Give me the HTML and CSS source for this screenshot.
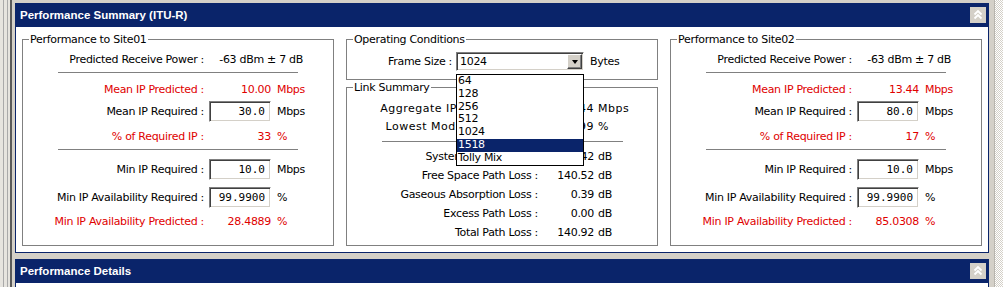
FILE: index.html
```html
<!DOCTYPE html>
<html lang="en">
	<head>
		<meta charset="UTF-8" />
		<title>Performance Summary</title>
		<link rel="stylesheet" href="styles.css">
	</head>
	<body>
		<div class="screen">
			<div class="edge"></div>
			<div class="main">
				<section class="panel panel-summary">
					<header class="panel-head">
						<span class="panel-title">Performance Summary (ITU-R)</span>
						<span class="collapse">
							<svg width="16" height="16" viewBox="0 0 16 16">
								<polyline points="4.5,7.5 8,4 11.5,7.5" />
								<polyline points="4.5,11.5 8,8 11.5,11.5" />
							</svg>
						</span>
					</header>
					<div class="panel-body summary">
						<fieldset class="group site">
							<legend>Performance to Site01</legend>
							<div class="row"><span class="lbl">Predicted Receive Power :</span><span class="wide">-63 dBm ± 7 dB</span></div>
							<div class="rule rule-a"></div>
							<div class="row red mt5"><span class="lbl">Mean IP Predicted :</span><span class="val">10.00</span><span class="unit">Mbps</span></div>
							<div class="row"><span class="lbl">Mean IP Required :</span><input class="num" type="text" value="30.0" /><span class="unit">Mbps</span></div>
							<div class="row red mt3"><span class="lbl">% of Required IP :</span><span class="val">33</span><span class="unit">%</span></div>
							<div class="rule rule-a"></div>
							<div class="row mt8"><span class="lbl">Min IP Required :</span><input class="num" type="text" value="10.0" /><span class="unit">Mbps</span></div>
							<div class="row mt6"><span class="lbl">Min IP Availability Required :</span><input class="num" type="text" value="99.9900" /><span class="unit">%</span></div>
							<div class="row red mt2"><span class="lbl">Min IP Availability Predicted :</span><span class="val">28.4889</span><span class="unit">%</span></div>
						</fieldset>

						<div class="middle">
							<fieldset class="group cond">
								<legend>Operating Conditions</legend>
								<div class="frow">
									<span class="flbl">Frame Size :</span>
									<div class="combo">
										<span class="combo-text">1024</span>
										<span class="combo-btn"><i class="tri"></i></span>
										<div class="droplist">
											<div>64</div>
											<div>128</div>
											<div>256</div>
											<div>512</div>
											<div>1024</div>
											<div class="sel">1518</div>
											<div>Tolly Mix</div>
										</div>
									</div>
									<span class="funit">Bytes</span>
								</div>
							</fieldset>
							<fieldset class="group link">
								<legend>Link Summary</legend>
								<div class="lrow spaced"><span class="llbl">Aggregate IP Throughput :</span><span class="lval">23.44</span><span class="lunit">Mbps</span></div>
								<div class="lrow spaced"><span class="llbl">Lowest Modulation Avail :</span><span class="lval">99.99</span><span class="lunit">%</span></div>
								<div class="rule rule-b"></div>
								<div class="lrow"><span class="llbl">System Fade Margin :</span><span class="lval">38.42</span><span class="lunit">dB</span></div>
								<div class="lrow"><span class="llbl">Free Space Path Loss :</span><span class="lval">140.52</span><span class="lunit">dB</span></div>
								<div class="lrow"><span class="llbl">Gaseous Absorption Loss :</span><span class="lval">0.39</span><span class="lunit">dB</span></div>
								<div class="lrow"><span class="llbl">Excess Path Loss :</span><span class="lval">0.00</span><span class="lunit">dB</span></div>
								<div class="lrow"><span class="llbl">Total Path Loss :</span><span class="lval">140.92</span><span class="lunit">dB</span></div>
							</fieldset>
						</div>

						<fieldset class="group site">
							<legend>Performance to Site02</legend>
							<div class="row"><span class="lbl">Predicted Receive Power :</span><span class="wide">-63 dBm ± 7 dB</span></div>
							<div class="rule rule-a"></div>
							<div class="row red mt5"><span class="lbl">Mean IP Predicted :</span><span class="val">13.44</span><span class="unit">Mbps</span></div>
							<div class="row"><span class="lbl">Mean IP Required :</span><input class="num" type="text" value="80.0" /><span class="unit">Mbps</span></div>
							<div class="row red mt3"><span class="lbl">% of Required IP :</span><span class="val">17</span><span class="unit">%</span></div>
							<div class="rule rule-a"></div>
							<div class="row mt8"><span class="lbl">Min IP Required :</span><input class="num" type="text" value="10.0" /><span class="unit">Mbps</span></div>
							<div class="row mt6"><span class="lbl">Min IP Availability Required :</span><input class="num" type="text" value="99.9900" /><span class="unit">%</span></div>
							<div class="row red mt2"><span class="lbl">Min IP Availability Predicted :</span><span class="val">85.0308</span><span class="unit">%</span></div>
						</fieldset>
					</div>
				</section>

				<section class="panel panel-details">
					<header class="panel-head">
						<span class="panel-title">Performance Details</span>
						<span class="collapse">
							<svg width="16" height="16" viewBox="0 0 16 16">
								<polyline points="4.5,7.5 8,4 11.5,7.5" />
								<polyline points="4.5,11.5 8,8 11.5,11.5" />
							</svg>
						</span>
					</header>
					<div class="panel-body"></div>
				</section>
			</div>
			<div class="track"></div>
		</div>
	</body>
</html>
```

FILE: styles.css
```css
html,
body {
	margin: 0;
	height: 100%;
	overflow: hidden;
}

body {
	background: #d4d0c8;
	color: #000;
	font-family: 'DejaVu Sans', sans-serif;
	font-size: 11px;
	letter-spacing: -0.3px;
}

.screen {
	display: flex;
	height: 287px;
	overflow: hidden;
}

.edge {
	width: 15px;
	flex: none;
	background: linear-gradient(
		to right,
		#e6e4df 0 3px,
		#a9a9a9 3px 4px,
		#e6e4df 4px 7px,
		#a9a9a9 7px 8px,
		#e6e4df 8px 10px,
		#5a5a5a 10px 12px,
		#d4d0c8 12px 15px
	);
}

.main {
	flex: 1;
	padding-top: 3px;
	margin-right: 5px;
}

.track {
	width: 8px;
	flex: none;
	border-left: 1px solid #b8b5ae;
	background-color: #fff;
	background-image: repeating-conic-gradient(#d4d0c8 0 25%, #fff 0 50%);
	background-size: 2px 2px;
}

/* panels */
.panel {
	background: #fff;
	border: 1px solid #0a246a;
	border-top: 0;
}

.panel-summary {
	margin-bottom: 6px;
}

.panel-details {
	border-bottom: 0;
}

.panel-head {
	height: 24px;
	background: #0a246a;
	color: #fff;
	display: flex;
	align-items: center;
	justify-content: space-between;
	padding: 0 2px 0 4px;
}

.panel-title {
	font-family: 'Liberation Sans', Arial, sans-serif;
	font-weight: bold;
	font-size: 11.5px;
	letter-spacing: 0;
}

.collapse {
	width: 16px;
	height: 16px;
	background: #d4d0c8;
	display: block;
}

.collapse svg {
	display: block;
	fill: none;
	stroke: #fff;
	stroke-width: 1.8;
}

.panel-body.summary {
	height: 225px;
	box-sizing: border-box;
	padding: 6px;
	display: grid;
	grid-template-columns: repeat(3, 1fr);
	column-gap: 12px;
}

.panel-details .panel-body {
	height: 4px;
}

/* group boxes */
.group {
	margin: 0;
	padding: 0;
	min-width: 0;
	border: 1px solid #808080;
}

.group legend {
	margin-left: 6px;
	padding: 0 1px;
	line-height: 13px;
}

.site {
	padding-top: 2px;
}

.row {
	display: flex;
	align-items: center;
	height: 22px;
	white-space: nowrap;
}

.red {
	color: #e00000;
}

.mt2 { margin-top: 2px; }
.mt3 { margin-top: 3px; }
.mt5 { margin-top: 5px; }
.mt6 { margin-top: 6px; }
.mt8 { margin-top: 8px; }

.lbl {
	width: 181px;
	flex: none;
	text-align: right;
}

.val {
	width: 62px;
	flex: none;
	margin-left: 5px;
	text-align: right;
}

.wide {
	width: 94px;
	flex: none;
	margin-left: 5px;
	text-align: right;
}

.unit {
	margin-left: 6px;
}

.num {
	width: 62px;
	height: 21px;
	flex: none;
	margin: 0 0 0 5px;
	box-sizing: border-box;
	padding: 0 5px 0 0;
	text-align: right;
	font-family: 'DejaVu Sans Mono', monospace;
	font-size: 11px;
	letter-spacing: 0;
	color: #000;
	background: #fff;
	border: 1px solid;
	border-color: #808080 #fff #fff #808080;
	box-shadow: inset 1px 1px #404040, inset -1px -1px #d4d0c8;
	outline: none;
}

.rule {
	height: 1px;
	background: #808080;
}

.rule-a {
	margin: 2px 0 0 35px;
	width: 240px;
}

.rule-b {
	margin: 6px 0 5px 35px;
	width: 241px;
}

/* middle column */
.middle {
	display: flex;
	flex-direction: column;
}

.cond {
	padding: 6px 0 8px;
}

.frow {
	display: flex;
	align-items: center;
	height: 19px;
}

.flbl {
	width: 105px;
	flex: none;
	text-align: right;
}

.combo {
	position: relative;
	width: 128px;
	height: 19px;
	flex: none;
	margin-left: 4px;
	box-sizing: border-box;
	padding: 1px;
	display: flex;
	background: #fff;
	border: 1px solid;
	border-color: #808080 #fff #fff #808080;
	box-shadow: inset 1px 1px #404040, inset -1px -1px #d4d0c8;
}

.combo-text {
	flex: 1;
	padding-left: 2px;
	line-height: 15px;
}

.combo-btn {
	width: 15px;
	height: 15px;
	box-sizing: border-box;
	background: #d4d0c8;
	border: 1px solid;
	border-color: #fff #404040 #404040 #fff;
	box-shadow: inset -1px -1px #808080;
	display: flex;
	align-items: center;
	justify-content: center;
}

.tri {
	width: 0;
	height: 0;
	border-left: 3.5px solid transparent;
	border-right: 3.5px solid transparent;
	border-top: 4px solid #000;
}

.droplist {
	position: absolute;
	z-index: 10;
	left: -1px;
	top: 21px;
	width: 128px;
	box-sizing: border-box;
	border: 1px solid #000;
	background: #fff;
}

.droplist div {
	height: 12.8px;
	line-height: 12.8px;
	padding-left: 1px;
}

.droplist .sel {
	background: #0a246a;
	color: #fff;
}

.funit {
	margin-left: 6px;
}

.link {
	flex: 1;
	margin-top: 1px;
	padding-top: 5px;
}

.lrow {
	display: flex;
	align-items: center;
	height: 19px;
	white-space: nowrap;
}

.lrow.spaced {
	height: 18px;
	letter-spacing: 0.5px;
}

.llbl {
	width: 191px;
	flex: none;
	text-align: right;
}

.lval {
	width: 50px;
	flex: none;
	margin-left: 6px;
	text-align: right;
}

.lunit {
	margin-left: 4px;
}
```
